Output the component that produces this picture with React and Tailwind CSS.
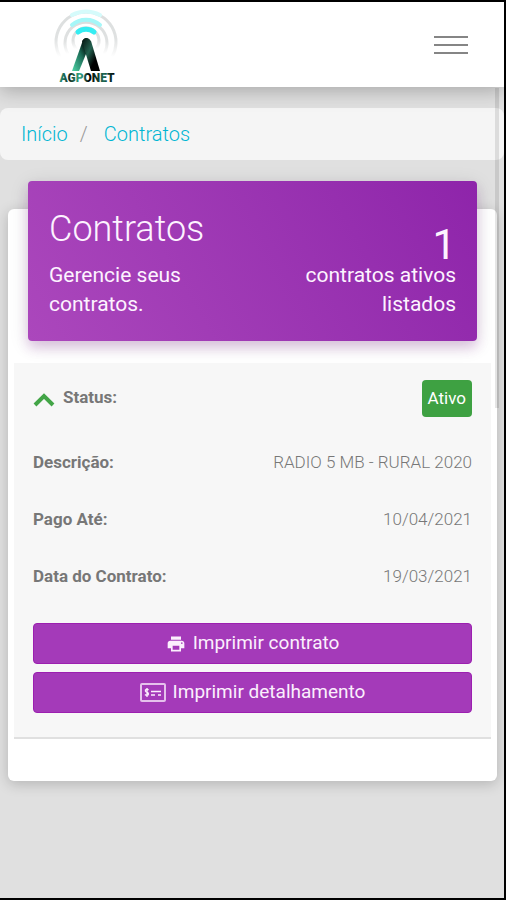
import React from 'react';
import { MdPrint } from 'react-icons/md';

const details = [
    { label: 'Descrição:', value: 'RADIO 5 MB - RURAL 2020' },
    { label: 'Pago Até:', value: '10/04/2021' },
    { label: 'Data do Contrato:', value: '19/03/2021' },
];

const Logo = () => (
    <svg viewBox="0 0 66 78" className="w-[66px] h-[78px]" role="img" aria-label="Agronet">
        <defs>
            <linearGradient id="leg" x1="0" y1="1" x2="1" y2="0">
                <stop offset="0" stopColor="#4fd6a8" />
                <stop offset="0.5" stopColor="#1c6b56" />
                <stop offset="0.75" stopColor="#03110e" />
            </linearGradient>
            <linearGradient id="legRight" x1="0" y1="0" x2="1" y2="1">
                <stop offset="0" stopColor="#02100c" />
                <stop offset="0.4" stopColor="#23614f" />
                <stop offset="0.7" stopColor="#000000" />
            </linearGradient>
            <linearGradient id="word" x1="0" y1="0" x2="1" y2="0">
                <stop offset="0" stopColor="#2fa583" />
                <stop offset="0.2" stopColor="#0c2a22" />
                <stop offset="0.38" stopColor="#38b08e" />
                <stop offset="0.55" stopColor="#000000" />
                <stop offset="0.8" stopColor="#1d6b56" />
                <stop offset="1" stopColor="#000000" />
            </linearGradient>
            <linearGradient id="wave" x1="0" y1="0" x2="0" y2="1">
                <stop offset="0" stopColor="#dbdede" />
                <stop offset="0.6" stopColor="#e0e2e2" />
                <stop offset="1" stopColor="#ffffff" />
            </linearGradient>
        </defs>
        <g fill="none" strokeLinecap="round">
            <path d="M7 51 A30 30 0 1 1 59 51" stroke="url(#wave)" strokeWidth="3" />
            <path d="M15 48 A21 21 0 1 1 51 48" stroke="url(#wave)" strokeWidth="3" />
            <path d="M23 43 A13 13 0 1 1 43 43" stroke="url(#wave)" strokeWidth="3" />
            <path d="M19 9 A31 31 0 0 1 47 9" stroke="#d5fbfb" strokeWidth="4" />
            <path d="M19 19 A21 21 0 0 1 47 19" stroke="#a5f7f8" strokeWidth="4" />
            <path d="M25 26 A13 13 0 0 1 41 26" stroke="#35edf2" strokeWidth="5" />
        </g>
        <path d="M30 34 Q33 30 37 34 L33 48 L26 65 L19 65 Z" fill="url(#leg)" />
        <path d="M29 35 Q33 29 38 35 L47 65 L38 65 L31 42 Z" fill="url(#legRight)" />
        <text x="34" y="76" textAnchor="middle" fontSize="12" fontWeight="900" fontFamily="Roboto, sans-serif" fill="url(#word)">AGPONET</text>
    </svg>
);

const ChevronUp = () => (
    <svg viewBox="0 0 22 14" className="mt-1 w-[22px] h-[14px]" aria-hidden="true">
        <path d="M2 12 L11 3 L20 12" fill="none" stroke="#43a547" strokeWidth="4" />
    </svg>
);

const MoneyCheckIcon = () => (
    <svg viewBox="0 0 26 19" className="w-[26px] h-[19px]" fill="none" stroke="currentColor" aria-hidden="true">
        <rect x="1" y="1" width="24" height="17" rx="1" strokeWidth="2" strokeOpacity="0.75" />
        <path d="M8.500 7 C7 5.500 4.800 6.500 5.500 8.300 C6 9.500 8.500 9 8.500 11 C8.300 12.800 6 12.700 5 11.500 M7 5 V14" strokeWidth="1.300" />
        <path d="M11 8.500 H21 M11 12 H15 M18 12 H21" strokeWidth="1.500" />
    </svg>
);

const ActionButton = ({ icon, children }) => (
    <button type="button" className="flex w-full h-[41px] items-center justify-center gap-[7px] rounded border border-[#9c1fb0] bg-[#a43ab9] text-[19px] text-[#fbeffd]">
        {icon}
        <span>{children}</span>
    </button>
);

const App = () => (
    <div className="relative flex min-h-screen flex-col overflow-hidden border-y-2 border-r-2 border-black bg-[#e0e0e0] font-['Roboto',sans-serif] text-[#777777]">
        <header className="relative flex h-[85px] items-center justify-between bg-white pl-[53px] pr-9 shadow-[0_4px_18px_rgba(0,0,0,0.25)]">
            <a href="#"><Logo /></a>
            <button type="button" aria-label="Menu" className="flex w-[34px] flex-col gap-[6px]">
                <span className="h-[2px] w-full bg-[#858585]" />
                <span className="h-[2px] w-full bg-[#858585]" />
                <span className="h-[2px] w-full bg-[#858585]" />
            </button>
        </header>

        <nav aria-label="breadcrumb" className="mt-[21px] flex h-[52px] items-center rounded-lg bg-[#f5f5f5] px-[21px] text-xl font-light text-[#00b5d3]">
            <a href="#">Início</a>
            <span className="pl-3 pr-4 text-[#999999]">/</span>
            <a href="#">Contratos</a>
        </nav>

        <main className="mb-10 mt-[49px] mr-[7px] ml-2 rounded-md bg-white px-[6px] pb-[42px] shadow-[0_3px_14px_rgba(0,0,0,0.2)]">
            <div className="relative -mt-7 mx-[14px] flex h-[160px] justify-between rounded bg-linear-60 from-[#ab47bc] to-[#8e24aa] px-[21px] text-[#fdf3ff] shadow-[0_4px_20px_rgba(0,0,0,0.12),0_7px_12px_rgba(156,39,176,0.2)]">
                <div className="w-1/2 pt-[26px]">
                    <h1 className="text-4xl leading-[44px] font-light">Contratos</h1>
                    <p className="mt-[10px] w-[150px] text-[21px] leading-[29px]">Gerencie seus contratos.</p>
                </div>
                <div className="w-[160px] pt-12 text-right">
                    <p className="text-[42px] leading-8">1</p>
                    <p className="text-[21px] leading-[29px]">contratos ativos listados</p>
                </div>
            </div>

            <section className="mt-[22px] border-b-2 border-[#e0e0e0] bg-[#f7f7f7] px-[19px] pt-4 pb-6">
                <dl className="text-[17px]">
                    <div className="flex h-[38px] items-center justify-between">
                        <dt className="flex items-center gap-2 font-bold">
                            <ChevronUp />
                            Status:
                        </dt>
                        <dd className="rounded bg-[#3ea142] px-[6px] py-[6px] leading-[25px] text-white">Ativo</dd>
                    </div>
                    <div className="pt-[17px]">
                        {details.map((item) => (
                            <div key={item.label} className="flex h-[57px] items-center justify-between">
                                <dt className="font-bold">{item.label}</dt>
                                <dd className="font-light">{item.value}</dd>
                            </div>
                        ))}
                    </div>
                </dl>
                <div className="mt-[18px] flex flex-col gap-2">
                    <ActionButton icon={<MdPrint size={20} />}>Imprimir contrato</ActionButton>
                    <ActionButton icon={<MoneyCheckIcon />}>Imprimir detalhamento</ActionButton>
                </div>
            </section>
        </main>

        {/* scroll thumb */}
        <div className="absolute right-[5px] top-[86px] h-80 w-1 bg-black/10" />
    </div>
);

export default App;
